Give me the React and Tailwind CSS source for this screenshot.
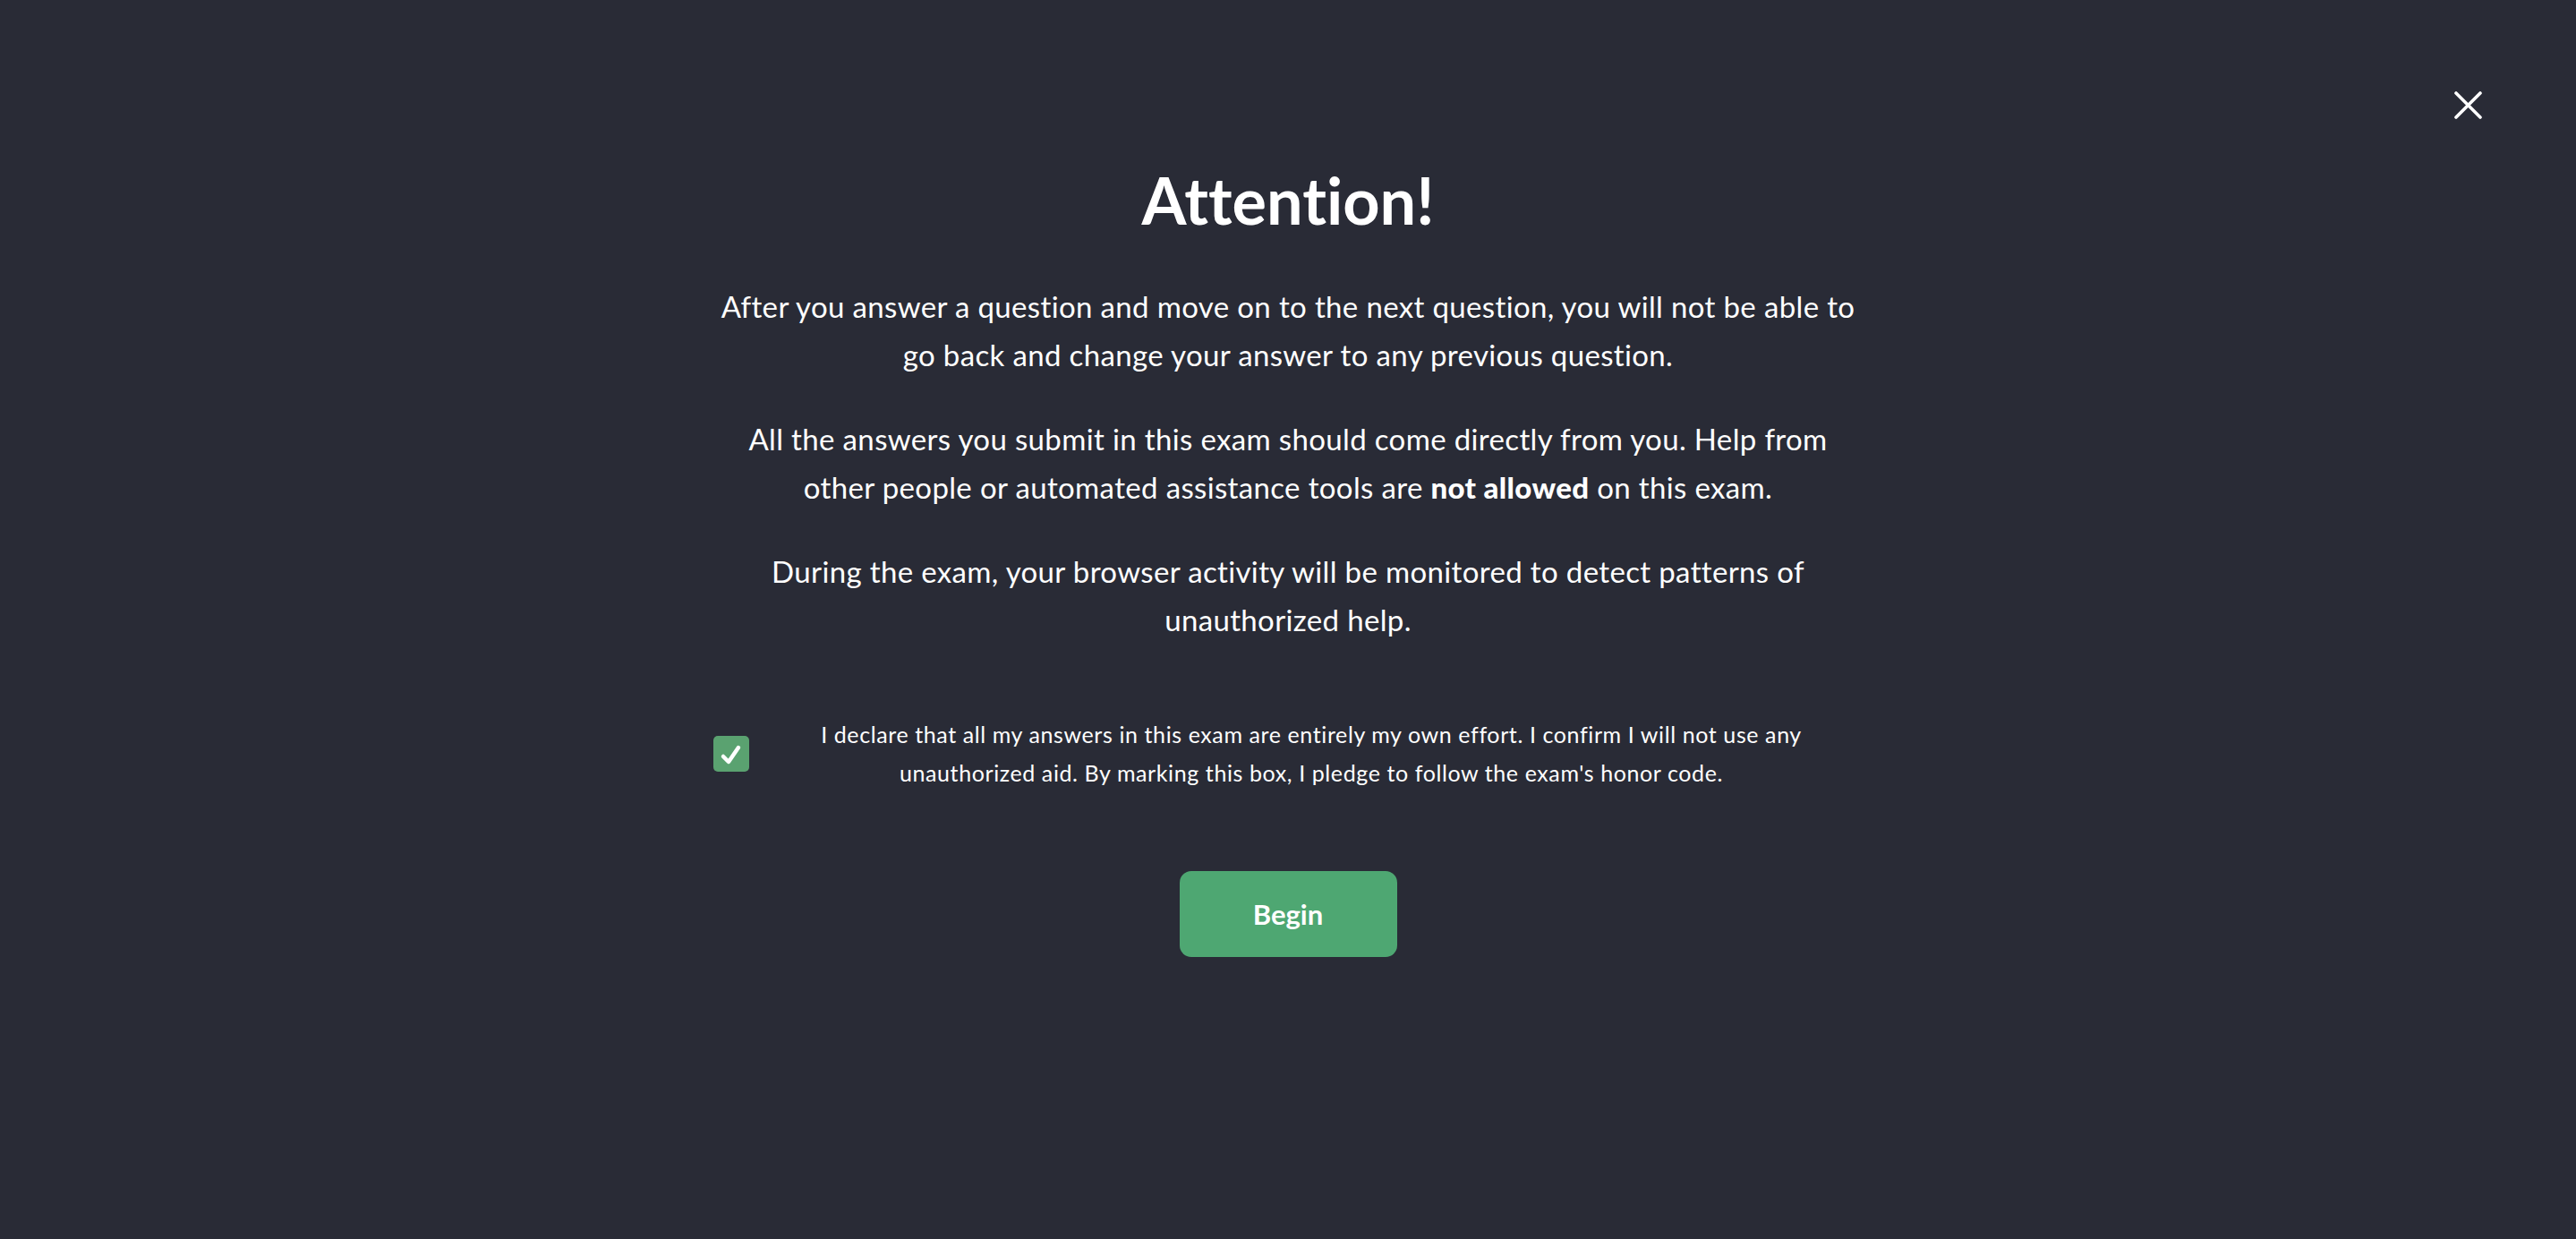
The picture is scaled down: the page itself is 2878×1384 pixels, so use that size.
import React from "react";

export default function App() {
  return (
    <div className="relative min-h-screen w-full bg-[#292b36] font-['Lato',sans-serif] text-white [font-variant-ligatures:none]">
      <button
        aria-label="Close"
        className="absolute right-[105px] top-[102px] flex h-[31px] w-[31px] items-center justify-center"
      >
        <svg viewBox="0 0 31 31" className="h-[31px] w-[31px]" fill="none" stroke="white" strokeWidth="3.6" strokeLinecap="round">
          <line x1="2" y1="2" x2="29" y2="29" />
          <line x1="29" y1="2" x2="2" y2="29" />
        </svg>
      </button>

      <div className="mx-auto flex w-[1284px] flex-col items-center pt-[180px]">
        <h1 className="text-[72px] font-bold leading-[1.2]">Attention!</h1>

        <div className="mt-[49px] flex flex-col gap-[40px] text-center text-[33px] leading-[54px] tracking-[0.35px]">
          <p>
            After you answer a question and move on to the next question, you will not be able to go back and change
            your answer to any previous question.
          </p>
          <p>
            All the answers you submit in this exam should come directly from you. Help from other people or automated
            assistance tools are <strong className="font-black">not allowed</strong> on this exam.
          </p>
          <p>
            During the exam, your browser activity will be monitored to detect patterns of unauthorized help.
          </p>
        </div>

        <label className="mt-[80px] flex w-full items-center gap-[12px]">
          <span className="flex h-[40px] w-[40px] shrink-0 items-center justify-center rounded-[5px] bg-[#5aa270]">
            <svg viewBox="0 0 40 40" className="h-[40px] w-[40px]" fill="none" stroke="white" strokeWidth="4.5" strokeLinecap="round" strokeLinejoin="round">
              <polyline points="11,23 17,29 28,13" />
            </svg>
          </span>
          <span className="flex-1 text-center text-[25px] leading-[43px] tracking-[0.6px]">
            I declare that all my answers in this exam are entirely my own effort. I confirm I will not use any
            unauthorized aid. By marking this box, I pledge to follow the exam's honor code.
          </span>
        </label>

        <button className="mt-[88px] flex h-[96px] w-[243px] items-center justify-center rounded-[13px] bg-[#4ea772] text-[31px] font-bold text-white">
          Begin
        </button>
      </div>
    </div>
  );
}
